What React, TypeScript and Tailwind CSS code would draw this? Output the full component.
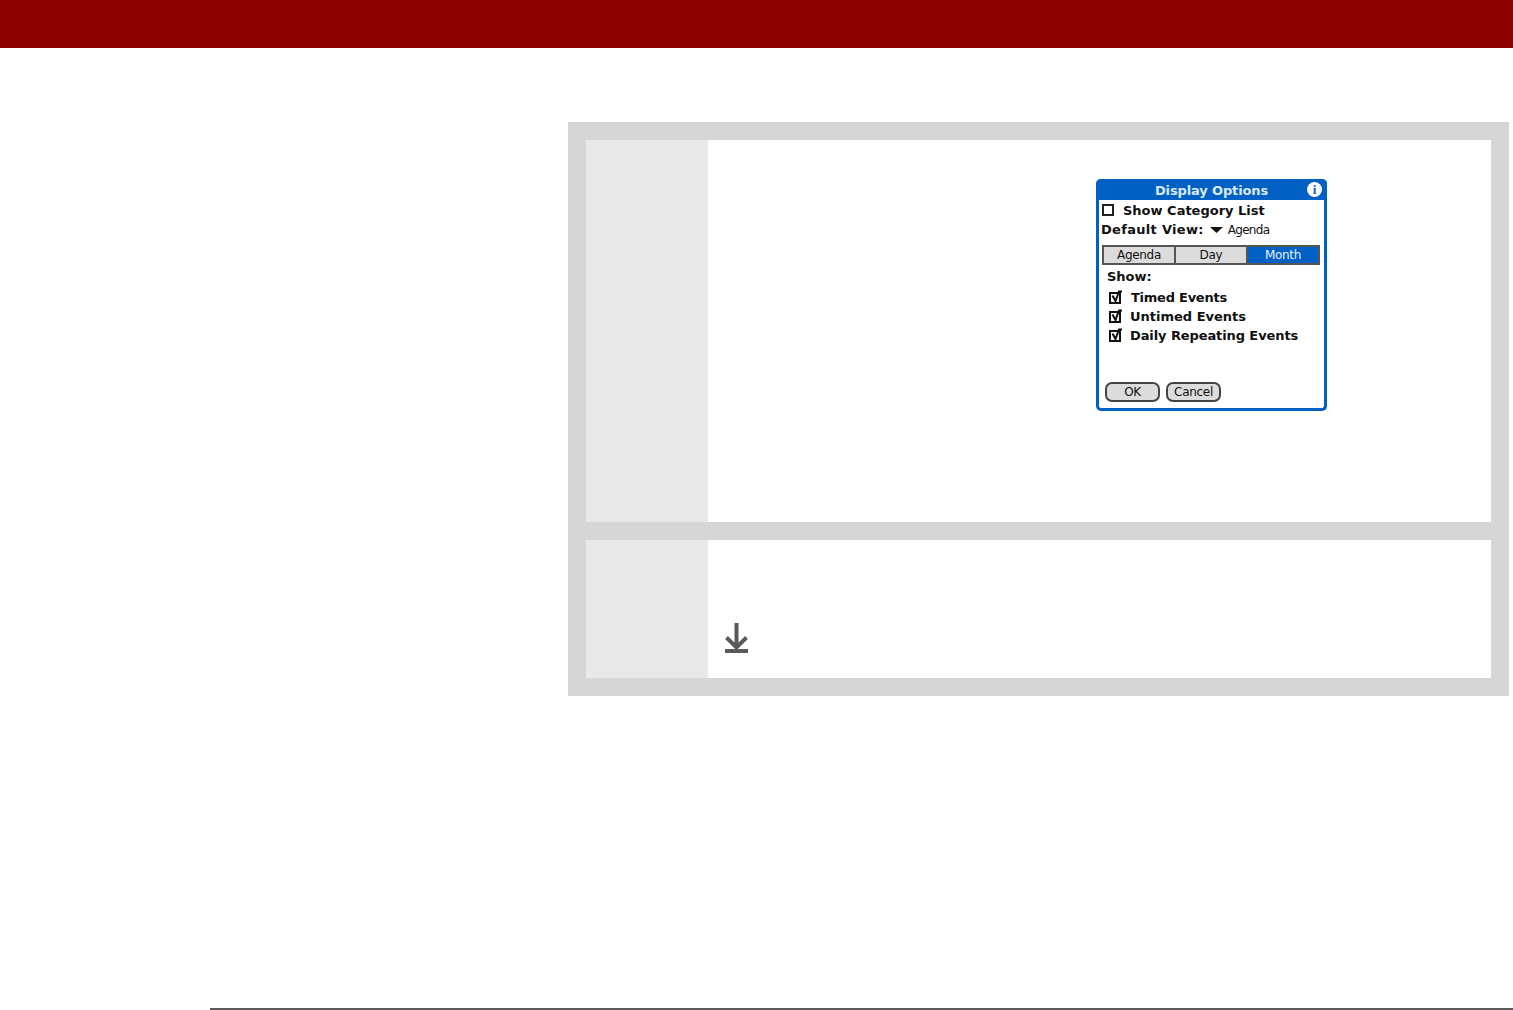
const palm = "font-['DejaVu_Sans',sans-serif]";

const CheckBox = ({ checked }: { checked?: boolean }) => (
  <svg width="15" height="15" viewBox="0 0 15 15" className="shrink-0">
    <rect x="1" y="3" width="10" height="10" fill="none" stroke="#111" strokeWidth="2" />
    {checked && <path d="M3.5 5.5 L6.5 11 L10 1.5 H13" fill="none" stroke="#111" strokeWidth="2" />}
  </svg>
);

const EventRow = ({ label, gap, tracking }: { label: string; gap: string; tracking: string }) => (
  <div className={`flex h-[19px] items-center pl-[10px] ${gap}`}>
    <CheckBox checked />
    <span className={`text-[13px] leading-none font-bold text-[#111] ${tracking}`}>{label}</span>
  </div>
);

const DisplayOptions = () => (
  <div className={`${palm} flex h-[232px] w-[231px] flex-col rounded-[5px] border-[3px] border-t-0 border-[#0060c4] bg-white`}>
    <div className="relative -mx-[3px] flex h-[21px] shrink-0 items-center justify-center rounded-t-[5px] bg-[#0060c4] pt-[1px]">
      <span className="text-[13px] leading-none font-bold tracking-[-0.13px] text-[#dbe8f8]">Display Options</span>
      <span className="absolute top-[3px] right-[5px] flex h-[15px] w-[15px] items-center justify-center rounded-full bg-white font-['Liberation_Serif',serif] text-[13px] leading-none font-bold text-[#0060c4]">
        i
      </span>
    </div>
    <div className="flex h-[20px] items-center gap-[8px] pl-[2px]">
      <svg width="13" height="13" viewBox="0 0 13 13" className="ml-[1px] shrink-0 mt-[1px]">
        <rect x="1" y="1" width="10" height="10" fill="none" stroke="#222" strokeWidth="2" />
      </svg>
      <span className="text-[13px] leading-none font-bold text-[#111]">Show Category List</span>
    </div>
    <div className="mt-[1px] flex h-[17px] items-center pl-[2px] text-[#111]">
      <span className="text-[13px] leading-none font-bold tracking-[0.3px]">Default View:</span>
      <svg width="13" height="6" viewBox="0 0 13 6" className="ml-[6px]">
        <path d="M0 0 H13 L6.5 6 Z" fill="#111" />
      </svg>
      <span className="ml-[5px] text-[12px] leading-none tracking-[-0.7px]">Agenda</span>
    </div>
    <div className="mx-[3px] mt-[7px] flex h-[20px] w-[218px] border-2 border-[#555] text-[12px] tracking-[-0.3px] text-[#111]">
      <div className="flex w-[72px] items-center justify-center border-r-2 border-[#555] bg-[#dcdcdc]">Agenda</div>
      <div className="flex w-[72px] items-center justify-center border-r-2 border-[#555] bg-[#dcdcdc]">Day</div>
      <div className="flex flex-1 items-center justify-center bg-[#0060c4] text-[#e8f0fa]">Month</div>
    </div>
    <div className="mt-[2px] h-[20px] pl-[8px] text-[13px] leading-[19px] font-bold text-[#111]">Show:</div>
    <div className="mt-[1px] flex flex-col">
      <EventRow label="Timed Events" gap="gap-[7px]" tracking="tracking-[-0.25px]" />
      <EventRow label="Untimed Events" gap="gap-[6px]" tracking="tracking-[0px]" />
      <EventRow label="Daily Repeating Events" gap="gap-[6px]" tracking="tracking-[-0.1px]" />
    </div>
    <div className="mt-auto mb-[6px] flex gap-[6px] pl-[6px] text-[12px] tracking-[-0.3px] text-[#111]">
      <div className="flex h-[20px] w-[55px] items-center justify-center rounded-[7px] border-2 border-[#444] bg-[#dcdcdc]">OK</div>
      <div className="flex h-[20px] w-[55px] items-center justify-center rounded-[7px] border-2 border-[#444] bg-[#dcdcdc]">Cancel</div>
    </div>
  </div>
);

export default function App() {
  return (
    <div className="flex min-h-[1010px] flex-col overflow-hidden bg-white">
      <div className="h-12 bg-[#8b0000]" />
      <div className="mt-[74px] mr-1 ml-[568px] flex flex-col gap-[18px] bg-[#d6d6d6] p-[18px]">
        <div className="flex h-[382px]">
          <div className="w-[122px] bg-[#e9e9e9]" />
          <div className="flex-1 bg-white pt-[39px] pl-[388px]">
            <DisplayOptions />
          </div>
        </div>
        <div className="flex h-[138px]">
          <div className="w-[122px] bg-[#e9e9e9]" />
          <div className="flex-1 bg-white pt-[83px] pl-[17px]">
            <svg width="23" height="31" viewBox="0 0 23 31">
              <path d="M11.5 0 V25 M1.5 14.5 L11.5 24.5 L21.5 14.5" fill="none" stroke="#5a5a5a" strokeWidth="4" />
              <rect x="0" y="26" width="23" height="4" fill="#5a5a5a" />
            </svg>
          </div>
        </div>
      </div>
      <div className="mt-auto ml-[210px] h-[2px] bg-[#5a5a5a]" />
    </div>
  );
}
